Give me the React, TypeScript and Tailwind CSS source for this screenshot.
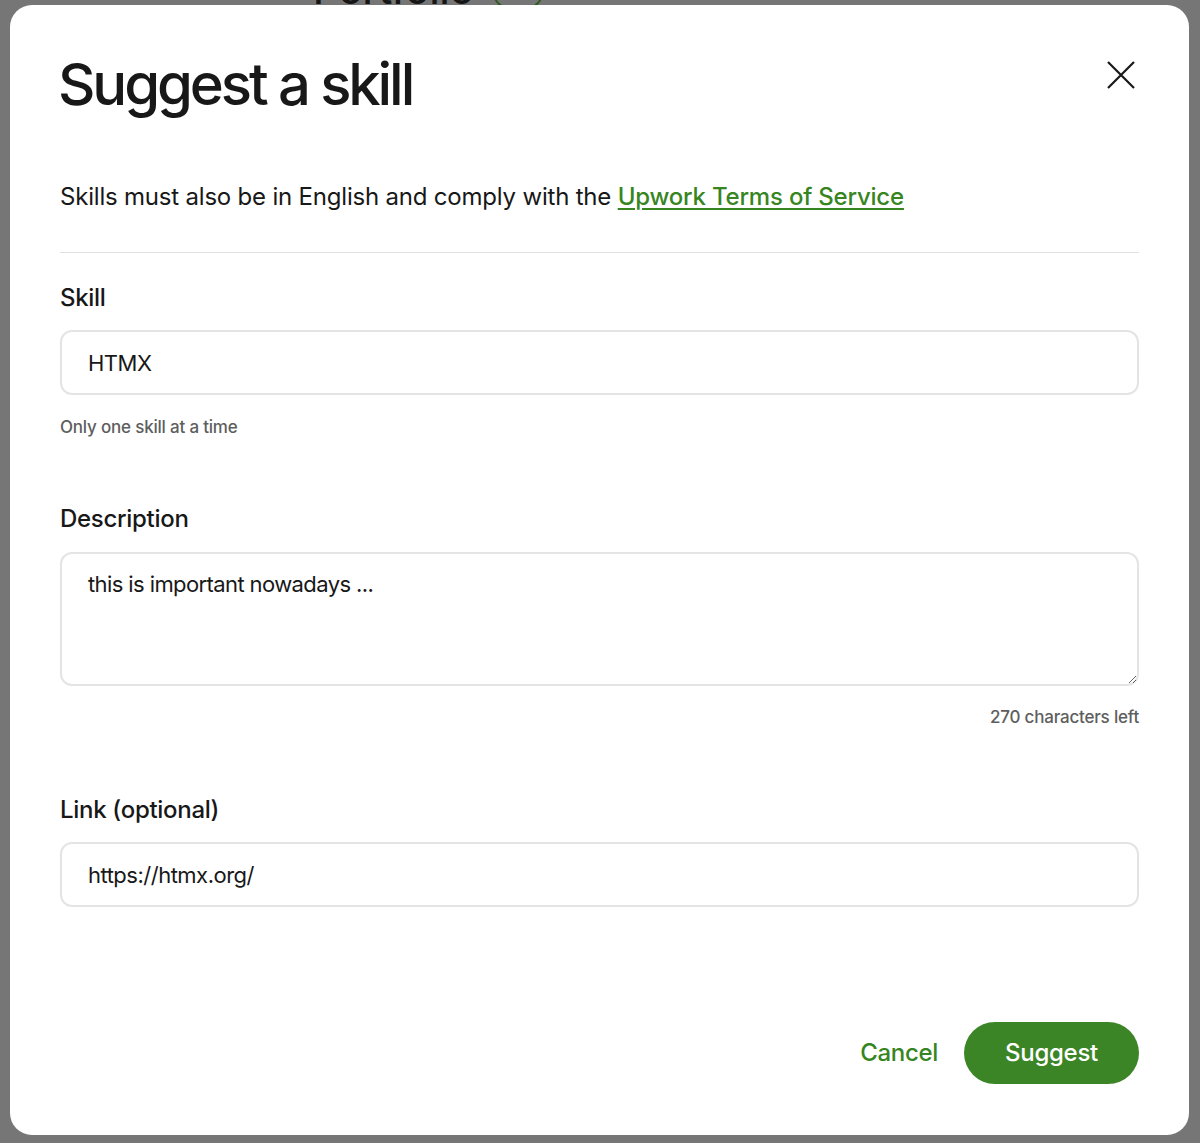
import React from 'react';

const Field: React.FC<{ label: string; value: string; className?: string }> = ({ label, value, className }) => (
  <div className={className}>
    <label className="block text-[24px] leading-[32px] font-medium text-[#181818] tracking-[-0.3px]">{label}</label>
    <input
      readOnly
      value={value}
      className="mt-[16px] block w-full h-[65px] rounded-[12px] border-2 border-[#e4e4e4] bg-white pl-[26px] pr-4 text-[22px] text-[#181818] tracking-[-0.5px] outline-none"
    />
  </div>
);

export default function App() {
  return (
    <div
      className="relative min-h-[1143px] bg-[#767676] pt-[5px] pl-[10px] pr-[11px] pb-[8px] overflow-hidden"
      style={{ fontFamily: 'Inter, "Liberation Sans", sans-serif' }}
    >
      {/* page behind the backdrop */}
      <div className="absolute left-[313px] top-[-30px] flex items-center gap-[18px]">
        <span className="text-[40px] leading-[40px] font-medium text-[#161616]">Portfolio</span>
        <span className="w-[52px] h-[40px] rounded-full border-2 border-[#2f5a22]" />
      </div>

      {/* Modal */}
      <div className="relative h-[1130px] rounded-[22px] bg-white px-[50px] pt-[45px] flex flex-col">
        <div className="flex items-start justify-between">
          <h1 className="-ml-[2px] text-[58px] leading-[68px] font-medium text-[#181818] tracking-[-3.1px]">Suggest a skill</h1>
          <button className="mt-[11px] mr-[4px]" aria-label="Close">
            <svg width="28" height="28" viewBox="0 0 28 28" fill="none" stroke="#181818" strokeWidth="2.2">
              <path d="M1 1 L27 27 M27 1 L1 27" />
            </svg>
          </button>
        </div>

        <p className="mt-[63px] text-[24px] leading-[32px] text-[#181818] tracking-[-0.2px]">
          Skills must also be in English and comply with the{' '}
          <a href="#" className="text-[#37851f] font-medium underline underline-offset-[3px] decoration-2">
            Upwork Terms of Service
          </a>
        </p>

        <hr className="mt-[39px] border-0 h-px bg-[#e0e0e0]" />

        <Field label="Skill" value="HTMX" className="mt-[29px]" />
        <p className="mt-[20px] text-[17px] leading-[24px] font-medium text-[#5e5e5e] tracking-[-0.2px]">
          Only one skill at a time
        </p>

        <div className="mt-[64px]">
          <label className="block text-[24px] leading-[32px] font-medium text-[#181818] tracking-[-0.3px]">Description</label>
          <textarea
            readOnly
            value="this is important nowadays ..."
            className="mt-[17px] block w-full h-[134px] rounded-[12px] border-2 border-[#e4e4e4] bg-white pl-[26px] pr-4 pt-[15px] text-[22px] leading-[30px] text-[#181818] tracking-[-0.6px] outline-none resize-y"
          />
          <p className="mt-[19px] text-right text-[17px] leading-[24px] font-medium text-[#5e5e5e] tracking-[-0.2px]">
            270 characters left
          </p>
        </div>

        <Field label="Link (optional)" value="https://htmx.org/" className="mt-[65px]" />

        <div className="mt-[115px] flex items-center justify-end gap-[26px]">
          <button className="text-[24px] font-medium text-[#37851f] tracking-[-0.3px]">Cancel</button>
          <button className="h-[62px] w-[175px] rounded-full bg-[#3c8527] text-[24px] font-medium text-white tracking-[-0.3px]">
            Suggest
          </button>
        </div>
      </div>
    </div>
  );
}
